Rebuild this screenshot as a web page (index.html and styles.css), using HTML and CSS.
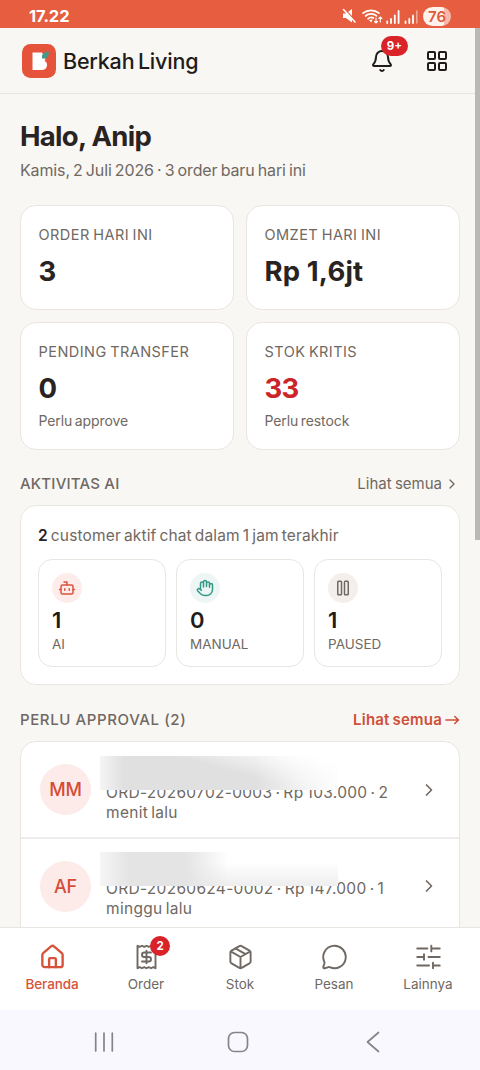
FILE: index.html
```html
<!DOCTYPE html>
<html lang="id">
<head>
<meta charset="utf-8">
<title>Berkah Living</title>
<link rel="stylesheet" href="styles.css">
</head>
<body>
<div class="phone">
  <div class="statusbar">
    <span class="clock">17.22</span>
    <svg class="status-icons" width="80" height="18" viewBox="0 0 80 18" fill="none" stroke="#fff" stroke-linecap="round">
      <path d="M1 6.500h3l6-4.500v13.500l-6-4.500H1z" fill="#fff" stroke="none"/>
      <path d="M2 1.500l12 13" stroke="#e65e3f" stroke-width="1.500"/>
      <path d="M1.500 2.500l11.500 12.500" stroke-width="1.600"/>
      <path d="M21 6.200a12.500 12.500 0 0 1 16 0M23.500 9a8.500 8.500 0 0 1 11-.2M26 11.800a5 5 0 0 1 5.500-.8" stroke-width="1.700"/>
      <path d="M27 13.200l2.300 2.300 1.200-3.300z" fill="#fff" stroke="none"/>
      <path d="M34 11v5m-1.500-1.500l1.500 1.500 1.500-1.500M38.300 15v-5m-1.500 1.500l1.500-1.500 1.500 1.500" stroke-width="1.100"/>
      <path d="M45.200 14.500v1.500M49 12v4M52.800 8.500v7.500M56.600 4v12M63.500 14.500v1.500M67.300 12v4M71 8.500v7.500" stroke-width="1.800"/>
      <path d="M74.800 4v12" stroke-width="1.600" opacity=".45"/>
    </svg>
    <span class="battery">76</span>
  </div>

  <header class="topbar">
    <svg class="logo" width="34" height="34" viewBox="0 0 34 34">
      <rect width="34" height="34" rx="8.500" fill="#e5533a"/>
      <path d="M10.500 8.500h9.500l3.500 6.500c-.3 1-.7 1.500-1 2 2 .8 2.800 2.200 2.500 4.500-.4 3-2.500 4.500-5.500 4.500h-9z" fill="#fff"/>
      <path d="M20.300 14.600c-1.200-3.600.8-6.600 6.200-7.400.9 4.500-1.200 8.200-6.200 7.400z" fill="#419b86"/>
    </svg>
    <span class="brand">Berkah Living</span>
    <div class="bell">
      <svg width="24" height="24" viewBox="0 0 24 24" class="line dark"><path d="M10.268 21a2 2 0 0 0 3.464 0M3.262 15.326A1 1 0 0 0 4 17h16a1 1 0 0 0 .74-1.673C19.410 13.956 18 12.499 18 8A6 6 0 0 0 6 8c0 4.499-1.411 5.956-2.738 7.326"/></svg>
      <span class="badge badge-wide">9+</span>
    </div>
    <svg width="24" height="24" viewBox="0 0 24 24" class="line dark"><rect x="3" y="3" width="7" height="7" rx="1"/><rect x="14" y="3" width="7" height="7" rx="1"/><rect x="14" y="14" width="7" height="7" rx="1"/><rect x="3" y="14" width="7" height="7" rx="1"/></svg>
  </header>

  <main class="content">
    <h1 class="greeting">Halo, Anip</h1>
    <p class="date">Kamis, 2 Juli 2026 · 3 order baru hari ini</p>

    <div class="stats">
      <div class="card stat"><span class="label">ORDER HARI INI</span><b class="value">3</b></div>
      <div class="card stat"><span class="label">OMZET HARI INI</span><b class="value money">Rp 1,6jt</b></div>
      <div class="card stat"><span class="label">PENDING TRANSFER</span><b class="value">0</b><span class="note">Perlu approve</span></div>
      <div class="card stat"><span class="label">STOK KRITIS</span><b class="value critical">33</b><span class="note">Perlu restock</span></div>
    </div>

    <div class="section-head">
      <h2 class="h-ai">AKTIVITAS AI</h2>
      <span class="more">Lihat semua<svg width="16" height="16" viewBox="0 0 24 24" class="line"><path d="m9 18 6-6-6-6"/></svg></span>
    </div>
    <div class="card ai">
      <p class="summary"><b>2</b> customer aktif chat dalam 1 jam terakhir</p>
      <div class="tiles">
        <div class="tile">
          <span class="bubble red"><svg width="18" height="18" viewBox="0 0 24 24" class="line"><path d="M12 8V4H8"/><rect x="4" y="8" width="16" height="12" rx="2"/><path d="M2 14h2M20 14h2M15 13v2M9 13v2"/></svg></span>
          <b class="count">1</b><span class="kind">AI</span>
        </div>
        <div class="tile">
          <span class="bubble green"><svg width="18" height="18" viewBox="0 0 24 24" class="line"><path d="M18 11V6a2 2 0 0 0-4 0M14 10V4a2 2 0 0 0-4 0v2M10 10.500V6a2 2 0 0 0-4 0v8"/><path d="M18 8a2 2 0 1 1 4 0v6a8 8 0 0 1-8 8h-2c-2.800 0-4.500-.86-5.990-2.340l-3.600-3.600a2 2 0 0 1 2.830-2.820L7 15"/></svg></span>
          <b class="count">0</b><span class="kind">MANUAL</span>
        </div>
        <div class="tile">
          <span class="bubble grey"><svg width="18" height="18" viewBox="0 0 24 24" class="line"><rect x="14" y="3" width="5" height="18" rx="1"/><rect x="5" y="3" width="5" height="18" rx="1"/></svg></span>
          <b class="count">1</b><span class="kind">PAUSED</span>
        </div>
      </div>
    </div>

    <div class="section-head approval-head">
      <h2 class="h-approval">PERLU APPROVAL (2)</h2>
      <span class="more accent">Lihat semua<svg width="15" height="12" viewBox="0 0 15 12" class="arrow"><path d="M1 6h12.500M9.800 2.500l3.700 3.500-3.700 3.500"/></svg></span>
    </div>
    <div class="card list">
      <div class="row">
        <span class="avatar">MM</span>
        <div class="order"><p>ORD-20260702-0003 · Rp 103.000 · 2<br>menit lalu</p><span class="veil veil-a"></span></div>
        <svg width="20" height="20" viewBox="0 0 24 24" class="line"><path d="m9 18 6-6-6-6"/></svg>
      </div>
      <div class="row">
        <span class="avatar">AF</span>
        <div class="order"><p>ORD-20260624-0002 · Rp 147.000 · 1<br>minggu lalu</p><span class="veil veil-b"></span></div>
        <svg width="20" height="20" viewBox="0 0 24 24" class="line"><path d="m9 18 6-6-6-6"/></svg>
      </div>
    </div>
  </main>

  <nav class="tabs">
    <a class="tab active"><svg width="28" height="28" viewBox="0 0 24 24" class="line"><path d="M15 21v-7a1 1 0 0 0-1-1h-4a1 1 0 0 0-1 1v7"/><path d="M3 10a2 2 0 0 1 .709-1.528l7-6a2 2 0 0 1 2.582 0l7 6A2 2 0 0 1 21 10v9a2 2 0 0 1-2 2H5a2 2 0 0 1-2-2z"/></svg><span>Beranda</span></a>
    <a class="tab"><svg width="28" height="28" viewBox="0 0 24 24" class="line"><path d="M4 2v20l2-1 2 1 2-1 2 1 2-1 2 1 2-1 2 1V2l-2 1-2-1-2 1-2-1-2 1-2-1-2 1Z"/><path d="M16 8h-6a2 2 0 1 0 0 4h4a2 2 0 1 1 0 4H8M12 17.500v-11"/></svg><i class="badge badge-round">2</i><span>Order</span></a>
    <a class="tab"><svg width="28" height="28" viewBox="0 0 24 24" class="line"><path d="M11 21.730a2 2 0 0 0 2 0l7-4A2 2 0 0 0 21 16V8a2 2 0 0 0-1-1.730l-7-4a2 2 0 0 0-2 0l-7 4A2 2 0 0 0 3 8v8a2 2 0 0 0 1 1.730zM12 22V12M3.290 7 12 12l8.710-5M7.500 4.270l9 5.150"/></svg><span>Stok</span></a>
    <a class="tab"><svg width="28" height="28" viewBox="0 0 24 24" class="line"><path d="M2.992 16.342a2 2 0 0 1 .094 1.167l-1.065 3.290a1 1 0 0 0 1.236 1.168l3.413-.998a2 2 0 0 1 1.099.092 10 10 0 1 0-4.777-4.719"/></svg><span>Pesan</span></a>
    <a class="tab"><svg width="28" height="28" viewBox="0 0 24 24" class="line"><path d="M22 4.500h-7.500M11 4.500H2M22 12h-10M8 12H2M22 19.500h-6M12.500 19.500H2M14.500 2v5M8 9.500v5M16 17v5"/></svg><span>Lainnya</span></a>
  </nav>

  <div class="sysbar">
    <svg width="20" height="20" viewBox="0 0 20 20"><path d="M1.700 1v18M10 1v18M18.300 1v18"/></svg>
    <svg class="home-key" width="22" height="22" viewBox="0 0 22 22"><rect x="1.500" y="1.500" width="19" height="19" rx="6"/></svg>
    <svg width="14" height="22" viewBox="0 0 14 22"><path d="M12.500 1.500L1.500 11l11 9.500"/></svg>
  </div>
  <div class="scrollbar"></div>
</div>
</body>
</html>
```
FILE: styles.css
```css
* { box-sizing: border-box; }
body { margin: 0; font-family: Inter, "Open Sans", sans-serif; color: #292322; background: #f9f7f3; }
h1, h2, p { margin: 0; }
svg { display: block; flex: none; }
.phone { position: relative; width: 480px; height: 1070px; display: flex; flex-direction: column; overflow: hidden; }
.line { fill: none; stroke: currentColor; stroke-width: 2; stroke-linecap: round; stroke-linejoin: round; }
.dark { color: #211c1a; }

.statusbar { flex: none; height: 28px; display: flex; align-items: center; padding: 4px 29px 0 29px; background: #e65e3f; color: #fff; }
.clock { flex: 1; font-size: 16.5px; line-height: 20px; font-weight: 700; letter-spacing: -.1px; }
.status-icons { margin-right: 1px; }
.battery { width: 28px; height: 19px; border-radius: 10px; background: linear-gradient(90deg, #fff2ec 76%, #f6b8ab 76%); color: #e0593b; font-size: 15px; line-height: 19px; font-weight: 600; text-align: center; }

.topbar { flex: none; height: 66px; display: flex; align-items: center; padding: 0 31px 0 22px; border-bottom: 1px solid #e8e5e1; }
.brand { flex: 1; margin-left: 7px; font-size: 21.5px; line-height: 28px; font-weight: 500; letter-spacing: -.2px; word-spacing: -2px; color: #211c1a; }
.bell { position: relative; margin-right: 31px; }
.badge { position: absolute; background: #d92328; color: #fff; font-style: normal; font-weight: 700; text-align: center; }
.badge-wide { left: 11px; top: -13px; width: 27px; height: 20px; border-radius: 10px; font-size: 11.5px; line-height: 20px; }

.content { flex: none; height: 833px; overflow: hidden; padding: 24px 20px 0; color: #706862; }
.greeting { font-size: 27.5px; line-height: 36px; font-weight: 700; letter-spacing: -.7px; color: #292322; }
.date { margin-top: 4px; font-size: 16px; line-height: 24px; letter-spacing: -.13px; word-spacing: -1.2px; white-space: nowrap; }
.stats { display: grid; grid-template-columns: 1fr 1fr; grid-template-rows: 105px 128px; gap: 12px; margin-top: 23px; }
.card { background: #fff; border: 1px solid #e9e6e2; border-radius: 16px; }
.stat { display: flex; flex-direction: column; align-items: flex-start; padding: 19px 18px 0 17.5px; white-space: nowrap; }
.label { font-size: 14.5px; line-height: 20px; letter-spacing: .45px; word-spacing: -1px; }
.value { margin-top: 7px; font-size: 27.5px; line-height: 38px; font-weight: 700; color: #292322; letter-spacing: -.8px; }
.money { letter-spacing: .15px; }
.critical { color: #cc2529; }
.note { margin-top: 4px; font-size: 14px; line-height: 20px; letter-spacing: -.1px; word-spacing: -1.2px; }

.section-head { display: flex; justify-content: space-between; align-items: center; height: 24px; margin: 22px 0 9px; }
.approval-head { margin-top: 23px; }
h2 { font-size: 15px; line-height: 24px; font-weight: 500; letter-spacing: .2px; white-space: nowrap; }
.h-approval { letter-spacing: .6px; }
.more { display: flex; align-items: center; font-size: 15px; line-height: 24px; gap: 2px; word-spacing: -1px; }
.accent { color: #cf4f38; font-weight: 600; gap: 3px; letter-spacing: .2px; }
.arrow { fill: none; stroke: currentColor; stroke-width: 1.6; stroke-linecap: round; stroke-linejoin: round; }

.ai { height: 180px; padding: 18px 17px 0; }
.summary { font-size: 15.5px; line-height: 24px; word-spacing: -1.5px; letter-spacing: .15px; white-space: nowrap; }
.summary b { color: #292322; font-weight: 600; }
.tiles { display: grid; grid-template-columns: repeat(3, 1fr); gap: 10px; margin-top: 11px; }
.tile { display: flex; flex-direction: column; align-items: flex-start; height: 108px; padding: 13px 13px 0; border: 1px solid #e9e6e2; border-radius: 14px; }
.bubble { display: flex; align-items: center; justify-content: center; width: 30px; height: 30px; border-radius: 50%; }
.red { background: #fdecea; color: #dc5340; }
.green { background: #edf6f5; color: #329a85; }
.grey { background: #f2efec; }
.count { margin-top: 3px; font-size: 22px; line-height: 28px; font-weight: 600; color: #211c1a; }
.kind { font-size: 13.5px; line-height: 20px; }

.list { height: 240px; }
.row { display: flex; align-items: center; height: 97px; padding: 0 20px 0 19px; border-bottom: 2px solid #eeecea; }
.row + .row { height: 94px; border-bottom: 0; }
.avatar { flex: none; width: 51px; height: 51px; border-radius: 50%; background: #fdebea; color: #d54c37; font-size: 18px; line-height: 51px; font-weight: 500; text-align: center; letter-spacing: -.3px; }
.order { position: relative; flex: 1; margin-left: 15px; padding-top: 26px; font-size: 15.5px; line-height: 20px; letter-spacing: .3px; word-spacing: -1.5px; white-space: nowrap; }
.order p { position: relative; }
.veil { position: absolute; left: -6px; top: -1px; height: 34px; }
.veil-a { width: 238px; background: linear-gradient(90deg, rgba(250,250,250,.8), rgba(250,250,250,0) 10%), linear-gradient(195deg, #fff 6%, rgba(255,255,255,0) 45%), linear-gradient(90deg, #e0e0e0 0 65%, #efefef 82%, #fcfcfc 100%); }
.veil-b { width: 238px; background: linear-gradient(90deg, rgba(250,250,250,.8), rgba(250,250,250,0) 12%), linear-gradient(90deg, #e4e4e4 0 36%, rgba(240,240,240,0) 54%), linear-gradient(#fff 30%, #eee); }

.tabs { flex: none; display: grid; grid-template-columns: repeat(5, 94px); padding: 15px 5px 0; height: 83px; background: #fff; border-top: 1px solid #e9e6e2; }
.tab { position: relative; display: flex; flex-direction: column; align-items: center; gap: 1px; color: #706862; font-size: 13.5px; line-height: 24px; }
.tab svg { stroke-width: 1.7; width: 27px; height: 28px; }
.tab.active svg { stroke-width: 2.1; }
.active { color: #d6523b; }
.active span { font-weight: 500; letter-spacing: -.1px; }
.badge-round { left: 51px; top: -7px; width: 20px; height: 20px; border-radius: 50%; font-size: 11.5px; line-height: 20px; }

.sysbar { flex: none; display: flex; align-items: center; justify-content: space-between; height: 60px; padding: 3px 100px 0 94px; background: #f8f8fe; }
.sysbar svg { fill: none; stroke: #858489; stroke-width: 1.7; stroke-linecap: round; stroke-linejoin: round; }
.sysbar .home-key { margin-right: 4px; }
.scrollbar { position: absolute; right: 0; top: 28px; width: 5px; height: 512px; background: #bab9b6; }
```
